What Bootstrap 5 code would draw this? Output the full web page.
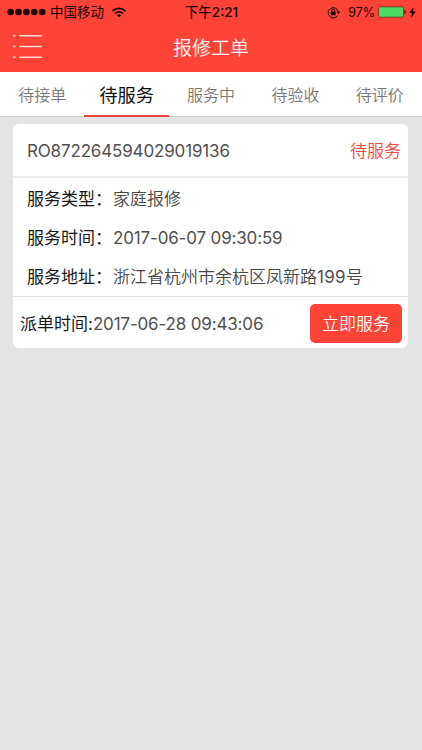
<!DOCTYPE html>
<html lang="zh-CN">
<head>
<meta charset="utf-8">
<meta name="viewport" content="width=device-width, initial-scale=1">
<title>报修工单</title>
<link href="https://cdn.jsdelivr.net/npm/bootstrap@5.3.0/dist/css/bootstrap.min.css" rel="stylesheet">
<style>
body{font-family:Inter,"Noto Sans CJK SC",sans-serif;font-size:17px;line-height:24px;background:#e3e4e6;color:#1a1a1a;min-height:750px;overflow:hidden}
.top{background:#ff4337;height:72px}
.status{height:24px;padding:0 6px 0 7px;font-size:13.5px;line-height:24px;color:#1d0605}
.status>div{flex:1 1 0}
.status .clock{flex:0 0 auto;font-weight:500;font-size:13.5px}
.pct{font-size:13px;letter-spacing:-.3px;margin-left:7px}
.batt{margin-left:3px}
.bolt{margin-left:3px}
.title-row{height:48px;color:#fff;font-size:19px;font-weight:350;line-height:49px}
.menu-btn{left:12px;top:9px;line-height:0}
.tabs{height:45px;background:#fff;border-bottom:1px solid #cbcccd}
.tabs .nav-link{flex:1 1 0;min-width:0;height:45px;padding:0;line-height:47px;font-size:16px;font-weight:350;color:#777;border-radius:0}
.tabs .nav-link.active{color:#111;font-size:18.3px;font-weight:400;border-bottom:2px solid #e94740}
.order{margin:7px 14px 0 13px;border:0;border-radius:6px}
.order-head{height:54px;padding:2px 7px 0 14px;border-bottom:2px solid #ededef}
.val{color:#484848;font-weight:350}
.num{font-size:17px;font-weight:400;color:#505050;letter-spacing:-.16px}
.addr .num{letter-spacing:.3px}
.state{color:#f4483e;font-weight:350}
.order-body{padding:1px 14px 0;height:118px}
.info{height:39.4px}
.info .lbl{width:86px}
.order-foot{height:52px;padding:2px 6px 0 7px;border-top:1px solid #e1e2e6}
.order-foot .lead-in{padding-top:1px}
.go{width:92px;height:39px;background:#ff4337;color:#fff;font-weight:350;font-size:17px;border-radius:5px;padding:2px 0 0;border:0}
</style>
<script src="https://cdn.jsdelivr.net/npm/bootstrap@5.3.0/dist/js/bootstrap.bundle.min.js"></script>
</head>
<body>
<header class="top">
  <div class="status d-flex align-items-center">
    <div class="d-flex align-items-center">
      <svg width="39" height="8" fill="#1d0605"><circle cx="3.6" cy="4" r="3.3"/><circle cx="11.5" cy="4" r="3.3"/><circle cx="19.4" cy="4" r="3.3"/><circle cx="27.3" cy="4" r="3.3"/><circle cx="35.2" cy="4" r="3.3"/></svg>
      <span class="ms-1">中国移动</span>
      <svg class="ms-2" width="14" height="11" viewBox="0 0 14 11" fill="none" stroke="#1d0605" stroke-width="1.7"><path d="M.6 4.1a9.1 9.1 0 0 1 12.8 0M3 6.5a5.7 5.7 0 0 1 8 0"/><path d="M7 10.6 4.9 8.4a3 3 0 0 1 4.2 0z" fill="#1d0605" stroke="none"/></svg>
    </div>
    <div class="clock">下午2:21</div>
    <div class="d-flex align-items-center justify-content-end">
      <svg width="14" height="13" viewBox="0 0 14 13" fill="none" stroke="#1d0605"><path d="M10.3 9.9a5.1 5.1 0 1 1 .9-4.4"/><path d="M9.4 5.5h4l-2 2.4z" fill="#1d0605" stroke="none"/><path d="M3.8 5.6h4.8v3.6H3.8z" fill="#1d0605" stroke="none"/><path d="M4.8 6V4.6a1.4 1.4 0 0 1 2.8 0V6"/></svg>
      <span class="pct">97%</span>
      <svg class="batt" width="28" height="12" viewBox="0 0 28 12"><rect x=".5" y=".8" width="25" height="10.4" rx="1.8" fill="#4cd964" stroke="#7d3c20"/><path d="M26.5 4q1.3.6 1.3 2t-1.3 2z" fill="#1d0605"/></svg>
      <svg class="bolt" width="7" height="11" viewBox="0 0 7 11"><path d="M4.6 0 .2 6.1h2.7L1.9 11l4.9-6.6H4z" fill="#1d0605"/></svg>
    </div>
  </div>
  <div class="title-row position-relative text-center">
    <a class="menu-btn position-absolute" href="#" aria-label="菜单"><svg width="31" height="27" fill="none" stroke="#ffd9d5" stroke-width="1.6"><path d="M1 2.7h2.5M7 2.7h23M1 13.5h2.5M7 13.5h23M1 24.3h2.5M7 24.3h23"/></svg></a>
    报修工单
  </div>
</header>
<nav class="tabs nav nav-fill flex-nowrap">
  <a class="nav-link" href="#">待接单</a>
  <a class="nav-link active" href="#">待服务</a>
  <a class="nav-link" href="#">服务中</a>
  <a class="nav-link" href="#">待验收</a>
  <a class="nav-link" href="#">待评价</a>
</nav>
<main class="card order">
  <div class="order-head d-flex align-items-center justify-content-between"><span class="num">RO872264594029019136</span><span class="state">待服务</span></div>
  <div class="order-body">
    <div class="info d-flex align-items-center"><span class="lbl">服务类型：</span><span class="val">家庭报修</span></div>
    <div class="info d-flex align-items-center"><span class="lbl">服务时间：</span><span class="num">2017-06-07 09:30:59</span></div>
    <div class="info d-flex align-items-center"><span class="lbl">服务地址：</span><span class="val addr">浙江省杭州市余杭区凤新路<span class="num">199</span>号</span></div>
  </div>
  <div class="order-foot d-flex align-items-center justify-content-between"><div class="lead-in"><span>派单时间:</span><span class="num">2017-06-28 09:43:06</span></div><button class="btn go" type="button">立即服务</button></div>
</main>
</body>
</html>
